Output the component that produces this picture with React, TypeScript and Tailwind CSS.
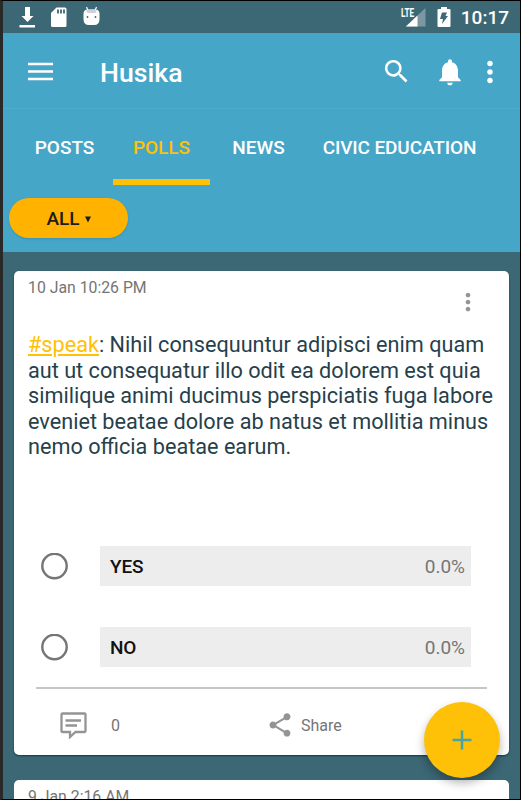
import { MdMoreVert, MdNotifications, MdSearch, MdShare } from "react-icons/md";

interface PollOption {
  label: string;
  percent: string;
}

const tabs = [
  { name: "POSTS", active: false, style: "w-[97px] ml-[13px]" },
  { name: "POLLS", active: true, style: "w-[97px]" },
  { name: "NEWS", active: false, style: "w-[97px]" },
  { name: "CIVIC EDUCATION", active: false, style: "w-[185px] tracking-[-0.12px]" },
];

const options: PollOption[] = [
  { label: "YES", percent: "0.0%" },
  { label: "NO", percent: "0.0%" },
];

function StatusBar() {
  return (
    <div className="flex h-[32px] shrink-0 items-center bg-[#3c6775] pl-[16px] pr-[11px] text-white">
      <svg width="17" height="22" viewBox="0 0 17 22" fill="currentColor">
        <path d="M6 1h5v9h3.500l-6 6L2.500 10H6zM.5 19h15.500v2.500H.5z" />
      </svg>
      <svg className="ml-[15px]" width="17" height="22" viewBox="0 0 17 22">
        <path fill="currentColor" d="M5.500 1.500H14q1.500 0 1.500 1.500v16.500q0 1.500-1.500 1.500H1.500Q0 21 0 19.500V7z" />
        <path stroke="#3c6775" strokeWidth="1.800" d="M7 3.500v4M10 3.500v4M13 3.500v4" />
      </svg>
      <svg className="ml-[15px]" width="17" height="22" viewBox="0 0 17 22">
        <path stroke="currentColor" strokeWidth="1.200" d="M3.500 1l1.500 3.500M13.500 1L12 4.500" />
        <path fill="currentColor" d="M.5 8q0-4.500 4-4.500h8q4 0 4 4.500v5q0 6-5.500 6H6Q.5 19 .5 13z" />
        <path fill="#c9d5da" d="M3 4.500q2-1 5.500-1t5.500 1L12.500 7h-8z" />
        <circle cx="4.500" cy="11" r="0.900" fill="#3c6775" />
        <circle cx="12.500" cy="11" r="0.900" fill="#3c6775" />
      </svg>
      <div className="relative ml-auto h-[20px] w-[25px]">
        <svg width="25" height="20" viewBox="0 0 25 20">
          <path fill="#7b98a2" d="M24.500 1v18.500h-20z" />
          <path fill="currentColor" d="M16.500 8.500v11H5z" />
        </svg>
        <span className="absolute left-0 top-0 origin-left scale-x-[0.68] text-[12px] font-bold leading-[12px]">LTE</span>
      </div>
      <svg className="ml-[11px]" width="14" height="22" viewBox="0 0 14 22">
        <path fill="currentColor" d="M4 1h6v2h2.500q1 0 1 1v16q0 1-1 1h-11q-1 0-1-1V4q0-1 1-1H4z" />
        <path fill="#3c6775" d="M5 6.500h5L8.500 10H11L5 18l1-5H3z" />
      </svg>
      <span className="ml-[10px] pt-[2px] text-[19px] font-medium leading-[32px]">10:17</span>
    </div>
  );
}

function Header() {
  return (
    <div className="h-[219px] shrink-0 bg-[#46a6c7] text-white">
      <div className="flex h-[76px] items-center border-b border-[#4eabca] pl-[25px] pr-[13px] pt-[2px]">
        <svg width="25" height="19" viewBox="0 0 25 19" stroke="currentColor" strokeWidth="2.700">
          <path d="M0 2h25M0 9.500h25M0 17h25" />
        </svg>
        <h1 className="ml-[47px] pt-[3px] text-[26.700px] font-medium">Husika</h1>
        <MdSearch className="ml-auto" size={31} />
        <MdNotifications className="ml-[22px]" size={32} />
        <MdMoreVert className="ml-[7px]" size={34} />
      </div>
      <div className="flex h-[76px]">
        {tabs.map((tab) => (
          <div key={tab.name} className={`flex flex-col items-center ${tab.style}`}>
            <span
              className={`grow whitespace-nowrap pt-[25px] text-[19px] font-medium leading-[27px] ${
                tab.active ? "text-[#fec107]" : "text-white"
              }`}
            >
              {tab.name}
            </span>
            {tab.active && <div className="h-[6px] w-full bg-[#fec107]" />}
          </div>
        ))}
      </div>
      <button className="ml-[6px] mt-[13px] flex h-[40px] w-[119px] items-center justify-center rounded-full bg-[#ffb300] pt-[2px] text-[19px] font-medium text-[#1c1c1c] shadow-sm">
        ALL
        <svg className="ml-[5px]" width="6" height="7" viewBox="0 0 6 7">
          <path fill="#1c1c1c" d="M0 .5h6L3 6.500z" />
        </svg>
      </button>
    </div>
  );
}

function PollCard() {
  return (
    <div className="flex h-[484px] shrink-0 flex-col rounded-[5px] bg-white shadow-[0_1px_2px_rgba(0,50,60,0.8)]">
      <div className="flex h-[61px] justify-between pl-[14px] pr-[27px]">
        <span className="pt-[7px] text-[15.800px] leading-[20px] text-[#757575]">10 Jan 10:26 PM</span>
        <MdMoreVert className="mt-[17px]" size={28} color="#949494" />
      </div>
      <p className="h-[214px] whitespace-nowrap pl-[14px] text-[21.670px] leading-[25.600px] text-[#263f4b]">
        <a className="text-[#fec107] underline">#speak</a>: Nihil consequuntur adipisci enim quam
        <br />
        aut ut consequatur illo odit ea dolorem est quia
        <br />
        similique animi ducimus perspiciatis fuga labore
        <br />
        eveniet beatae dolore ab natus et mollitia minus
        <br />
        nemo officia beatae earum.
      </p>
      <div className="flex flex-col gap-[41px]">
        {options.map((option) => (
          <div key={option.label} className="flex h-[40px] items-center pl-[27px] pr-[38px]">
            <svg width="27" height="27" viewBox="0 0 27 27" fill="none" stroke="#757575" strokeWidth="2.400">
              <circle cx="13.500" cy="13" r="12.200" />
            </svg>
            <div className="ml-[32px] flex h-[40px] grow items-center justify-between bg-[#ededed] pl-[10px] pr-[6px] pt-[3px] text-[19px]">
              <span className="font-medium tracking-[-0.2px] text-[#111111]">{option.label}</span>
              <span className="text-[#757575]">{option.percent}</span>
            </div>
          </div>
        ))}
      </div>
      <div className="ml-[22px] mr-[22px] mt-[20px] h-[2px] bg-[#c6c6c6]" />
      <div className="flex h-[66px] items-center pl-[46px] pt-[6px] text-[16px] text-[#757575]">
        <svg width="27" height="27" viewBox="0 0 27 27" fill="none" stroke="#949494" strokeWidth="2.300">
          <path d="M2.500 1.500h22q1 0 1 1v16.500q0 1-1 1h-9L10 25v-5H2.500q-1 0-1-1V2.500q0-1 1-1z" />
          <path d="M5.500 8.500h15.500M5.500 13.500h11.500" />
        </svg>
        <span className="ml-[24px] w-[144px] pt-[1px]">0</span>
        <MdShare className="ml-[11px]" size={28} color="#949494" />
        <span className="ml-[7px] pt-[1px]">Share</span>
      </div>
    </div>
  );
}

export default function App() {
  return (
    <div className="relative flex h-[800px] w-[521px] flex-col overflow-hidden border-b-[1px] border-l-[3px] border-r-[1px] border-t-[1px] border-b-black border-l-[#292929] border-r-black border-t-black bg-[#3c6775] font-[Roboto,sans-serif]">
      <StatusBar />
      <Header />
      <div className="flex flex-col gap-[25px] pl-[11px] pr-[11px] pt-[19px]">
        <PollCard />
        <div className="h-[60px] shrink-0 rounded-[5px] bg-white pl-[14px] pt-[7px] text-[15.800px] leading-[20px] text-[#757575]">
          9 Jan 2:16 AM
        </div>
      </div>
      {/* Floating add button */}
      <button className="absolute bottom-[21px] right-[20px] flex h-[76px] w-[76px] items-center justify-center rounded-full bg-[#fec107] shadow-[0_5px_10px_rgba(0,0,0,0.3)]">
        <svg width="20" height="20" viewBox="0 0 20 20" stroke="#46a6a7" strokeWidth="2.500">
          <path d="M10 .5v19M.5 10h19" />
        </svg>
      </button>
    </div>
  );
}
